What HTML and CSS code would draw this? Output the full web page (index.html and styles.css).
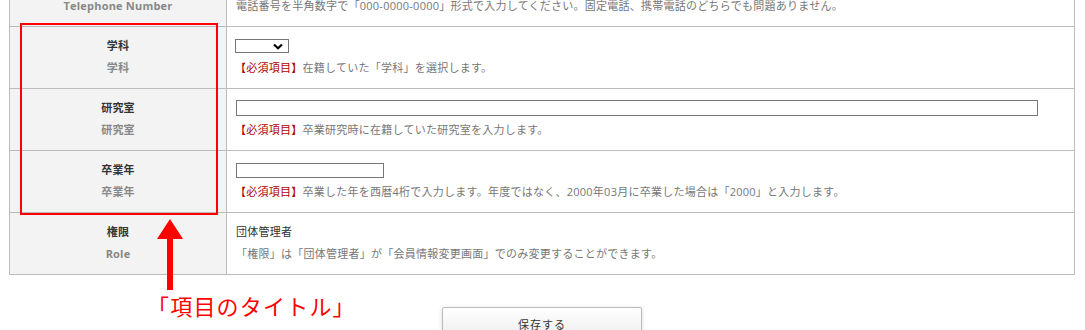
FILE: index.html
```html
<!DOCTYPE html>
<html lang="ja">

<head>
    <meta charset="UTF-8">
    <title>会員情報</title>
    <link rel="stylesheet" href="styles.css">
</head>

<body>
    <div class="page">
        <table class="form-table">
            <tr>
                <th>
                    <div class="label">電話番号</div>
                    <div class="sub">Telephone Number</div>
                </th>
                <td>
                    <div class="line"><input class="field field-tel" type="text"></div>
                    <div class="note">電話番号を半角数字で「000-0000-0000」形式で入力してください。固定電話、携帯電話のどちらでも問題ありません。</div>
                </td>
            </tr>
            <tr>
                <th>
                    <div class="label">学科</div>
                    <div class="sub">学科</div>
                </th>
                <td>
                    <div class="line">
                        <span class="select">
                            <svg width="10" height="7" viewBox="0 0 10 7"><path d="M1 1.5 L5 5.2 L9 1.5" fill="none" stroke="#000" stroke-width="2.2"/></svg>
                        </span>
                    </div>
                    <div class="note"><span class="req">【必須項目】</span>在籍していた「学科」を選択します。</div>
                </td>
            </tr>
            <tr>
                <th>
                    <div class="label">研究室</div>
                    <div class="sub">研究室</div>
                </th>
                <td>
                    <div class="line"><input class="field field-long" type="text"></div>
                    <div class="note"><span class="req">【必須項目】</span>卒業研究時に在籍していた研究室を入力します。</div>
                </td>
            </tr>
            <tr>
                <th>
                    <div class="label">卒業年</div>
                    <div class="sub">卒業年</div>
                </th>
                <td>
                    <div class="line"><input class="field field-year" type="text"></div>
                    <div class="note"><span class="req">【必須項目】</span>卒業した年を西暦4桁で入力します。年度ではなく、2000年03月に卒業した場合は「2000」と入力します。</div>
                </td>
            </tr>
            <tr>
                <th>
                    <div class="label">権限</div>
                    <div class="sub">Role</div>
                </th>
                <td>
                    <div class="line value">団体管理者</div>
                    <div class="note">「権限」は「団体管理者」が「会員情報変更画面」でのみ変更することができます。</div>
                </td>
            </tr>
        </table>

        <div class="actions">
            <button class="save-btn" type="button">保存する</button>
        </div>
    </div>

    <!-- 注釈 -->
    <div class="mark-box"></div>
    <svg class="mark-arrow" width="30" height="72" viewBox="0 0 30 72">
        <path d="M15 0 L28 20 L18 20 L18 71 L12 71 L12 20 L2 20 Z" fill="#f00"/>
    </svg>
    <div class="mark-text">「項目のタイトル」</div>
</body>

</html>
```

FILE: styles.css
```css
* {
    margin: 0;
    padding: 0;
    box-sizing: border-box;
}

body {
    font-family: "Open Sans", "Noto Sans CJK JP", sans-serif;
    font-size: 11px;
    color: #333;
    background: #fff;
    overflow: hidden;
}

.page {
    margin: -36px 10px 0 9px;
}

.form-table {
    width: 100%;
    border-collapse: collapse;
    border: 1px solid #bbb;
}

.form-table th,
.form-table td {
    border: 1px solid #bbb;
    padding: 8px 9px 9px;
    vertical-align: top;
    line-height: 22px;
}

.form-table th {
    width: 217px;
    background: #f3f3f3;
    text-align: center;
    font-weight: bold;
    letter-spacing: 0.2px;
}

.form-table td {
    letter-spacing: 0.25px;
}

.label {
    color: #333;
}

.sub {
    color: #888;
}

.line {
    height: 22px;
    display: flex;
    align-items: center;
}

.note {
    color: #777;
}

.req {
    color: #b00000;
    margin-left: -1px;
}

.value {
    color: #333;
}

.field {
    height: 15px;
    border: 1px solid #767676;
    border-radius: 0;
    background: #fff;
}

.field-tel {
    width: 148px;
}

.field-long {
    width: 802px;
    height: 16px;
}

.field-year {
    width: 148px;
}

.select {
    width: 54px;
    height: 14px;
    margin-left: -1px;
    border: 1px solid #767676;
    display: flex;
    align-items: center;
    justify-content: flex-end;
    padding-right: 5px;
}

.actions {
    display: flex;
    justify-content: center;
    padding-top: 32px;
}

.save-btn {
    width: 200px;
    height: 34px;
    font-family: inherit;
    font-size: 11px;
    letter-spacing: 1px;
    color: #333;
    background: linear-gradient(#ffffff, #ececec);
    border: 1px solid #bbb;
    border-radius: 2px;
    box-shadow: 0 1px 4px rgba(0, 0, 0, 0.15);
}

.mark-box {
    position: absolute;
    left: 20px;
    top: 23px;
    width: 198px;
    height: 192px;
    border: 2px solid #f00;
}

.mark-arrow {
    position: absolute;
    left: 155px;
    top: 219px;
}

.mark-text {
    position: absolute;
    left: 147px;
    top: 289px;
    font-family: "Noto Sans CJK JP", sans-serif;
    font-size: 22px;
    line-height: 32px;
    letter-spacing: 1.2px;
    color: #f00;
}
```
